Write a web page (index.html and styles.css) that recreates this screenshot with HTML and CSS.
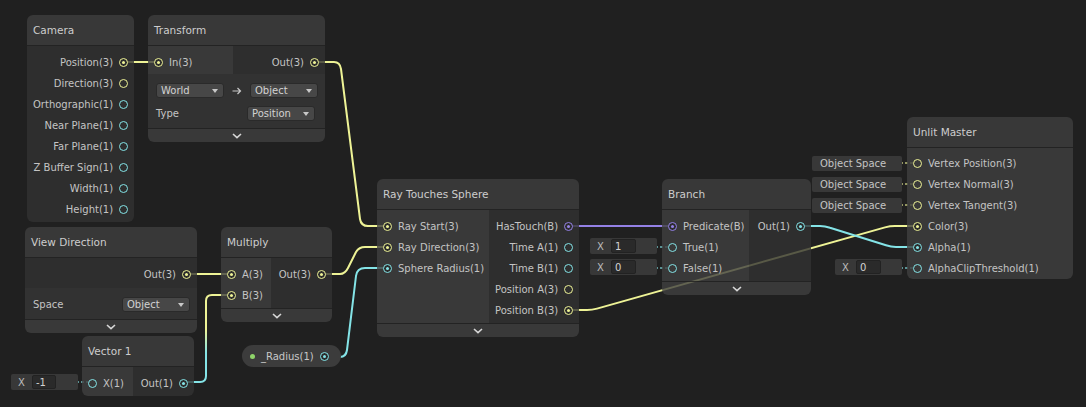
FILE: index.html
```html
<!DOCTYPE html>
<html lang="en">
<head>
<meta charset="utf-8">
<title>Shader Graph</title>
<link rel="stylesheet" href="styles.css">
</head>
<body>
<main class="canvas">
  <svg class="wires" width="1086" height="407" viewBox="0 0 1086 407">
    <defs>
      <linearGradient id="gv1" gradientUnits="userSpaceOnUse" x1="0" y1="382" x2="0" y2="295">
        <stop offset="0" stop-color="#84e4e7"/>
        <stop offset="0.33" stop-color="#84e4e7"/>
        <stop offset="0.6" stop-color="#eef396"/>
        <stop offset="1" stop-color="#eef396"/>
      </linearGradient>
    </defs>
    <g fill="none" stroke-width="2" stroke-linejoin="round">
      <path class="wy" d="M124,62 H158"/>
      <path class="wy" d="M315,62 H334 Q340,62 341,69 L360,219 Q361,226 368,226 H387"/>
      <path class="wy" d="M186,274 H231"/>
      <path stroke="url(#gv1)" d="M183,382 H200 Q206,382 206,376 V301 Q206,295 212,295 H231"/>
      <path class="wy" d="M322,274 H340 Q345,274 348,268 L356,252 Q359,247 365,247 H387"/>
      <path class="wc" d="M323,357 H340 Q346,357 347,350 L356,276 Q357,268 365,268 H387"/>
      <path class="wp" d="M569,226 H672"/>
      <path class="wy" d="M569,310 H587 Q592,310 597,308.6 L885,227.4 Q890,226 895,226 H917"/>
      <path class="wc" d="M800,226 H820 Q825,226 830,227.7 L886,245.3 Q891,247 896,247 H917"/>
    </g>
    <g fill="none" stroke-width="1.6" stroke-dasharray="3 2">
      <path class="dc" d="M71,382 H90"/>
      <path class="dc" d="M650,247 H670"/>
      <path class="dc" d="M650,268 H670"/>
      <path class="dy" d="M895,163 H915"/>
      <path class="dy" d="M895,184 H915"/>
      <path class="dy" d="M895,205 H915"/>
      <path class="dc" d="M895,268 H915"/>
    </g>
    <g>
      <circle class="fc" cx="69" cy="382" r="2"/>
      <circle class="fc" cx="648" cy="247" r="2"/>
      <circle class="fc" cx="648" cy="268" r="2"/>
      <circle class="fy" cx="893" cy="163" r="2"/>
      <circle class="fy" cx="893" cy="184" r="2"/>
      <circle class="fy" cx="893" cy="205" r="2"/>
      <circle class="fc" cx="893" cy="268" r="2"/>
    </g>
  </svg>

  <!-- Camera -->
  <section class="node n-camera">
    <header class="hdr">Camera</header>
    <div class="ports">
      <div class="col o">
        <div class="row o"><span>Position(3)</span><span class="port y on"></span></div>
        <div class="row o"><span>Direction(3)</span><span class="port y"></span></div>
        <div class="row o"><span>Orthographic(1)</span><span class="port c"></span></div>
        <div class="row o"><span>Near Plane(1)</span><span class="port c"></span></div>
        <div class="row o"><span>Far Plane(1)</span><span class="port c"></span></div>
        <div class="row o"><span>Z Buffer Sign(1)</span><span class="port c"></span></div>
        <div class="row o"><span>Width(1)</span><span class="port c"></span></div>
        <div class="row o"><span>Height(1)</span><span class="port c"></span></div>
      </div>
    </div>
  </section>

  <!-- Transform -->
  <section class="node n-transform">
    <header class="hdr">Transform</header>
    <div class="ports">
      <div class="col i tight w85">
        <div class="row"><span class="port y on"></span><span>In(3)</span></div>
      </div>
      <div class="col o tight">
        <div class="row o"><span>Out(3)</span><span class="port y on"></span></div>
      </div>
    </div>
    <div class="ctrl">
      <div class="crow">
        <div class="dd w68">World<i class="tri"></i></div>
        <svg class="arrow" width="10" height="8" viewBox="0 0 10 8"><path d="M0.5,4 H8.5 M5.5,1 L8.5,4 L5.5,7" fill="none" stroke="#c8c8c8" stroke-width="1.2"/></svg>
        <div class="dd w68">Object<i class="tri"></i></div>
      </div>
      <div class="crow">
        <span>Type</span>
        <div class="dd w68 mr3">Position<i class="tri"></i></div>
      </div>
    </div>
    <footer class="ftr"><svg width="10" height="6" viewBox="0 0 10 6"><path d="M1,1 L5,4.6 L9,1" fill="none" stroke="#d6d6d6" stroke-width="1.6"/></svg></footer>
  </section>

  <!-- View Direction -->
  <section class="node n-viewdir">
    <header class="hdr">View Direction</header>
    <div class="ports">
      <div class="col o loose">
        <div class="row o"><span>Out(3)</span><span class="port y on"></span></div>
      </div>
    </div>
    <div class="ctrl">
      <div class="crow">
        <span>Space</span>
        <div class="dd w68">Object<i class="tri"></i></div>
      </div>
    </div>
    <footer class="ftr"><svg width="10" height="6" viewBox="0 0 10 6"><path d="M1,1 L5,4.6 L9,1" fill="none" stroke="#d6d6d6" stroke-width="1.6"/></svg></footer>
  </section>

  <!-- Multiply -->
  <section class="node n-multiply">
    <header class="hdr">Multiply</header>
    <div class="ports">
      <div class="col i w50">
        <div class="row"><span class="port y on"></span><span>A(3)</span></div>
        <div class="row"><span class="port y on"></span><span>B(3)</span></div>
      </div>
      <div class="col o">
        <div class="row o"><span>Out(3)</span><span class="port y on"></span></div>
      </div>
    </div>
    <footer class="ftr"><svg width="10" height="6" viewBox="0 0 10 6"><path d="M1,1 L5,4.6 L9,1" fill="none" stroke="#d6d6d6" stroke-width="1.6"/></svg></footer>
  </section>

  <!-- Vector 1 -->
  <section class="node n-vector1">
    <header class="hdr">Vector 1</header>
    <div class="ports">
      <div class="col i w51">
        <div class="row"><span class="port c"></span><span>X(1)</span></div>
      </div>
      <div class="col o">
        <div class="row o"><span>Out(1)</span><span class="port c on"></span></div>
      </div>
    </div>
  </section>

  <!-- Ray Touches Sphere -->
  <section class="node n-ray">
    <header class="hdr">Ray Touches Sphere</header>
    <div class="ports">
      <div class="col i w112">
        <div class="row"><span class="port y on"></span><span>Ray Start(3)</span></div>
        <div class="row"><span class="port y on"></span><span>Ray Direction(3)</span></div>
        <div class="row"><span class="port c on"></span><span>Sphere Radius(1)</span></div>
      </div>
      <div class="col o">
        <div class="row o"><span>HasTouch(B)</span><span class="port p on"></span></div>
        <div class="row o"><span>Time A(1)</span><span class="port c"></span></div>
        <div class="row o"><span>Time B(1)</span><span class="port c"></span></div>
        <div class="row o"><span>Position A(3)</span><span class="port y"></span></div>
        <div class="row o"><span>Position B(3)</span><span class="port y on"></span></div>
      </div>
    </div>
    <footer class="ftr"><svg width="10" height="6" viewBox="0 0 10 6"><path d="M1,1 L5,4.6 L9,1" fill="none" stroke="#d6d6d6" stroke-width="1.6"/></svg></footer>
  </section>

  <!-- Branch -->
  <section class="node n-branch">
    <header class="hdr">Branch</header>
    <div class="ports">
      <div class="col i w87">
        <div class="row"><span class="port p on"></span><span>Predicate(B)</span></div>
        <div class="row"><span class="port c"></span><span>True(1)</span></div>
        <div class="row"><span class="port c"></span><span>False(1)</span></div>
      </div>
      <div class="col o">
        <div class="row o"><span>Out(1)</span><span class="port c on"></span></div>
      </div>
    </div>
    <footer class="ftr"><svg width="10" height="6" viewBox="0 0 10 6"><path d="M1,1 L5,4.6 L9,1" fill="none" stroke="#d6d6d6" stroke-width="1.6"/></svg></footer>
  </section>

  <!-- Unlit Master -->
  <section class="node n-unlit">
    <header class="hdr">Unlit Master</header>
    <div class="ports">
      <div class="col i full master">
        <div class="row"><span class="port y"></span><span>Vertex Position(3)</span></div>
        <div class="row"><span class="port y"></span><span>Vertex Normal(3)</span></div>
        <div class="row"><span class="port y"></span><span>Vertex Tangent(3)</span></div>
        <div class="row"><span class="port y on"></span><span>Color(3)</span></div>
        <div class="row"><span class="port c on"></span><span>Alpha(1)</span></div>
        <div class="row"><span class="port c"></span><span>AlphaClipThreshold(1)</span></div>
      </div>
    </div>
  </section>

  <!-- Inline port fields -->
  <div class="fld f-v1"><span class="fx">X</span><span class="box">-1</span></div>
  <div class="fld f-true"><span class="fx">X</span><span class="box">1</span></div>
  <div class="fld f-false"><span class="fx">X</span><span class="box">0</span></div>
  <div class="fld f-clip"><span class="fx">X</span><span class="box">0</span></div>
  <div class="fld os f-os1">Object Space</div>
  <div class="fld os f-os2">Object Space</div>
  <div class="fld os f-os3">Object Space</div>

  <!-- Property node -->
  <div class="pill"><span class="gdot"></span><span>_Radius(1)</span><span class="port c on"></span></div>
</main>
</body>
</html>
```
FILE: styles.css
```css
* { box-sizing: border-box; }
html, body { margin: 0; background: #202020; }
body {
  font-family: "DejaVu Sans", Verdana, sans-serif;
  font-size: 10px;
  color: #c4c4c4;
}
.canvas { position: relative; width: 1086px; height: 407px; overflow: hidden; }
.wires { position: absolute; left: 0; top: 0; }

.wy { stroke: #eef396; }
.wc { stroke: #84e4e7; }
.wp { stroke: #9481e6; }
.dy { stroke: #b9bd77; }
.dc { stroke: #6fb9bc; }
.fy { fill: #eef396; }
.fc { fill: #84e4e7; }

/* nodes (free canvas diagram) */
.node {
  position: absolute;
  border-radius: 6px;
  overflow: hidden;
  display: flex;
  flex-direction: column;
}
.n-camera { left: 27px; top: 15px; width: 107px; }
.n-transform { left: 148px; top: 15px; width: 177px; }
.n-viewdir { left: 25px; top: 227px; width: 172px; }
.n-multiply { left: 221px; top: 227px; width: 111px; }
.n-vector1 { left: 82px; top: 336px; width: 112px; }
.n-ray { left: 377px; top: 179px; width: 202px; }
.n-branch { left: 662px; top: 179px; width: 149px; }
.n-unlit { left: 907px; top: 117px; width: 166px; }

.hdr {
  height: 31px;
  padding-left: 6px;
  display: flex;
  align-items: center;
  font-size: 10.5px;
  color: #cdcdcd;
  background: rgba(63, 63, 63, 0.8);
  border-bottom: 1px solid rgba(30, 30, 30, 0.8);
}

.ports { display: flex; }
.col { padding: 6px 0 2px; }
.col.tight { padding: 6px 0 1px; }
.col.loose { padding: 6px 0 3px; }
.col.master { padding: 5px 0 0; }
.col.i { background: rgba(64, 64, 64, 0.8); flex: none; }
.col.o { background: rgba(50, 50, 50, 0.8); flex: 1; }
.col.full { flex: 1; }
.w50 { width: 50px; }
.w51 { width: 51px; }
.w85 { width: 85px; }
.w87 { width: 87px; }
.w112 { width: 112px; }

.row {
  height: 21px;
  display: flex;
  align-items: center;
  gap: 6px;
  padding: 0 6px;
  white-space: nowrap;
}
.row.o { justify-content: flex-end; }

.port {
  flex: none;
  width: 9px;
  height: 9px;
  border-radius: 50%;
  border: 1.5px solid var(--c);
  display: flex;
  align-items: center;
  justify-content: center;
}
.port.on { background: #2c2c2c; }
.port.on::after {
  content: "";
  width: 3px;
  height: 3px;
  border-radius: 50%;
  background: var(--c);
}
.y { --c: #eef396; }
.c { --c: #84e4e7; }
.p { --c: #9481e6; }

/* controls */
.ctrl {
  background: rgba(55, 55, 55, 0.8);
  padding: 9px 7px 7px 8px;
  display: flex;
  flex-direction: column;
  gap: 8px;
}
.crow {
  height: 15px;
  display: flex;
  align-items: center;
  justify-content: space-between;
}
.dd {
  height: 15px;
  padding: 0 5px 0 4px;
  display: flex;
  align-items: center;
  justify-content: space-between;
  background: #474747;
  border: 1px solid #2a2a2a;
  border-radius: 3px;
  color: #d2d2d2;
}
.w68 { width: 68px; }
.mr3 { margin-right: 3px; }
.tri {
  width: 0;
  height: 0;
  border-left: 3.5px solid transparent;
  border-right: 3.5px solid transparent;
  border-top: 4px solid #c8c8c8;
}
.arrow { display: block; }

.ftr {
  height: 14px;
  display: flex;
  align-items: center;
  justify-content: center;
  background: rgba(64, 64, 64, 0.8);
  border-top: 1px solid rgba(30, 30, 30, 0.8);
}
.ftr svg { display: block; }

/* inline port value fields */
.fld {
  position: absolute;
  height: 16px;
  display: flex;
  align-items: center;
  padding-left: 7px;
  background: #383838;
  border-radius: 2px;
  width: 67px;
}
.fx { width: 8px; color: #bdbdbd; }
.box {
  margin-left: 6px;
  width: 25px;
  height: 14px;
  padding-left: 3px;
  display: flex;
  align-items: center;
  background: #2a2a2a;
  border: 1px solid #222;
  border-radius: 2px;
  color: #d2d2d2;
}
.f-v1 { left: 11px; top: 374px; }
.f-v1 .box { width: 24px; }
.f-true { left: 590px; top: 238px; }
.f-false { left: 590px; top: 259px; }
.f-clip { left: 835px; top: 259px; }
.fld.os { width: 90px; height: 15px; padding-left: 8px; }
.f-os1 { left: 812px; top: 156px; }
.f-os2 { left: 812px; top: 177px; }
.f-os3 { left: 812px; top: 198px; }

/* property pill */
.pill {
  position: absolute;
  left: 242px;
  top: 345px;
  width: 99px;
  height: 22px;
  border-radius: 11px;
  background: #3c3c3c;
  display: flex;
  align-items: center;
  gap: 6px;
  padding: 0 13px 0 8px;
  color: #c8c8c8;
}
.gdot { width: 5px; height: 5px; border-radius: 50%; background: #8fd46a; flex: none; }
.pill .port { margin-left: auto; }
```
